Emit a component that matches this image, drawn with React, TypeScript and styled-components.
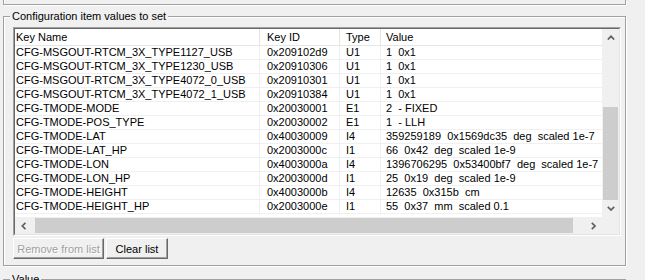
import React from 'react'
import styled, { createGlobalStyle } from 'styled-components'

const GlobalStyle = createGlobalStyle`
  html, body {
    margin: 0;
    background: #f0f0f0;
    overflow: hidden;
  }
  body {
    font-family: "Liberation Sans", Arial, sans-serif;
    font-size: 11px;
    color: #000;
  }
`

const Page = styled.div`
  padding-left: 3px;
  width: 623px;
`

// bottom edge of the group box above, the rest is scrolled out of view
const GroupTail = styled.div`
  height: 4px;
  border: 1px solid #a0a0a0;
  border-top: none;
  box-shadow: 1px 1px 0 #fff, inset 1px 0 0 #fff;
`

const GroupBox = styled.div<{ $top: number; $height?: number }>`
  margin-top: ${(p) => p.$top}px;
  border: 1px solid #a0a0a0;
  box-shadow: 1px 1px 0 #fff, inset 1px 1px 0 #fff;
  padding: 0 4px 6px 9px;
  ${(p) => (p.$height ? `height: ${p.$height}px;` : '')}
`

const Legend = styled.div`
  width: fit-content;
  margin: -7px 0 0 -3px;
  padding: 0 2px;
  background: #f0f0f0;
  line-height: 13px;
  white-space: nowrap;
`

const ListFrame = styled.div`
  margin-top: 4px;
  width: 608px;
  height: 209px;
  box-sizing: border-box;
  border: 1px solid;
  border-color: #a0a0a0 #fff #fff #a0a0a0;
`

const ListInner = styled.div`
  height: 100%;
  box-sizing: border-box;
  border: 1px solid;
  border-color: #696969 #e3e3e3 #e3e3e3 #696969;
  background: #fff;
  display: grid;
  grid-template-columns: 1fr 17px;
  grid-template-rows: 1fr 17px;
`

const Viewport = styled.div`
  overflow: hidden;
  min-width: 0;
`

const HeaderRow = styled.div`
  display: flex;
  height: 17px;
  box-sizing: border-box;
  border-bottom: 1px solid #e5e5e5;
`

const HeaderCell = styled.div<{ $w: number; $pad: number }>`
  flex: none;
  width: ${(p) => p.$w}px;
  box-sizing: border-box;
  padding-left: ${(p) => p.$pad}px;
  border-right: 1px solid #e5e5e5;
  line-height: 16px;
  white-space: nowrap;
  overflow: hidden;
`

const Row = styled.div`
  display: flex;
  height: 14px;
  box-sizing: border-box;
  border-bottom: 1px solid #f0f0f0;
`

const Cell = styled.div<{ $w: number; $pad: number }>`
  flex: none;
  width: ${(p) => p.$w}px;
  box-sizing: border-box;
  padding-left: ${(p) => p.$pad}px;
  border-right: 1px solid #f0f0f0;
  line-height: 13px;
  white-space: pre;
  overflow: hidden;
`

const VScroll = styled.div`
  background: #f0f0f0;
  display: flex;
  flex-direction: column;
`

const HScroll = styled.div`
  background: #f0f0f0;
  display: flex;
`

const Corner = styled.div`
  background: #f0f0f0;
`

const ArrowBox = styled.div`
  flex: none;
  width: 17px;
  height: 17px;
  display: flex;
  align-items: center;
  justify-content: center;
`

const VTrack = styled.div`
  flex: 1;
  display: flex;
  flex-direction: column;
  justify-content: flex-end;
  padding: 0 1px;
`

const HTrack = styled.div`
  flex: 1;
  display: flex;
  align-items: center;
`

const Thumb = styled.div<{ $len: number; $offset?: number; $horizontal?: boolean }>`
  background: #cdcdcd;
  ${(p) =>
    p.$horizontal
      ? `width: ${p.$len}px; height: 15px; margin-left: ${p.$offset ?? 0}px;`
      : `height: ${p.$len}px;`}
`

const ButtonRow = styled.div`
  display: flex;
  gap: 2px;
  margin-top: 2px;
`

const PushButton = styled.button<{ $w: number }>`
  width: ${(p) => p.$w}px;
  height: 21px;
  padding: 0;
  font: inherit;
  color: #000;
  background: #f0f0f0;
  border: 1px solid;
  border-color: #fff #696969 #696969 #fff;
  box-shadow: inset -1px -1px 0 #a0a0a0;

  &:disabled {
    color: #a0a0a0;
    text-shadow: 1px 1px 0 #fff;
  }
`

const Chevron = ({ dir }: { dir: 'up' | 'down' | 'left' | 'right' }) => {
  const pts = {
    up: '0.8,4.5 4,1.3 7.2,4.5',
    down: '0.8,0.8 4,4 7.2,0.8',
    left: '4.5,0.8 1.3,4 4.5,7.2',
    right: '0.8,0.8 4,4 0.8,7.2',
  }[dir]
  const vertical = dir === 'up' || dir === 'down'
  return (
    <svg width={vertical ? 8 : 5} height={vertical ? 5 : 8}>
      <polyline points={pts} fill="none" stroke="#606060" strokeWidth="1.7" />
    </svg>
  )
}

const columns = [
  { title: 'Key Name', w: 245, pad: 1 },
  { title: 'Key ID', w: 80, pad: 7 },
  { title: 'Type', w: 41, pad: 6 },
  { title: 'Value', w: 400, pad: 5 },
]

const rows = [
  ['CFG-MSGOUT-RTCM_3X_TYPE1127_USB', '0x209102d9', 'U1', '1  0x1'],
  ['CFG-MSGOUT-RTCM_3X_TYPE1230_USB', '0x20910306', 'U1', '1  0x1'],
  ['CFG-MSGOUT-RTCM_3X_TYPE4072_0_USB', '0x20910301', 'U1', '1  0x1'],
  ['CFG-MSGOUT-RTCM_3X_TYPE4072_1_USB', '0x20910384', 'U1', '1  0x1'],
  ['CFG-TMODE-MODE', '0x20030001', 'E1', '2  - FIXED'],
  ['CFG-TMODE-POS_TYPE', '0x20030002', 'E1', '1  - LLH'],
  ['CFG-TMODE-LAT', '0x40030009', 'I4', '359259189  0x1569dc35  deg  scaled 1e-7'],
  ['CFG-TMODE-LAT_HP', '0x2003000c', 'I1', '66  0x42  deg  scaled 1e-9'],
  ['CFG-TMODE-LON', '0x4003000a', 'I4', '1396706295  0x53400bf7  deg  scaled 1e-7'],
  ['CFG-TMODE-LON_HP', '0x2003000d', 'I1', '25  0x19  deg  scaled 1e-9'],
  ['CFG-TMODE-HEIGHT', '0x4003000b', 'I4', '12635  0x315b  cm'],
  ['CFG-TMODE-HEIGHT_HP', '0x2003000e', 'I1', '55  0x37  mm  scaled 0.1'],
]

export default function App() {
  return (
    <>
      <GlobalStyle />
      <Page>
        <GroupTail />
        <GroupBox $top={11}>
          <Legend>Configuration item values to set</Legend>
          <ListFrame>
            <ListInner>
              <Viewport>
                <HeaderRow>
                  {columns.map((c) => (
                    <HeaderCell key={c.title} $w={c.w} $pad={c.pad}>
                      {c.title}
                    </HeaderCell>
                  ))}
                </HeaderRow>
                {rows.map((r) => (
                  <Row key={r[0]}>
                    {r.map((v, i) => (
                      <Cell key={i} $w={columns[i].w} $pad={columns[i].pad}>
                        {v}
                      </Cell>
                    ))}
                  </Row>
                ))}
                <Row />
              </Viewport>
              <VScroll>
                <ArrowBox>
                  <Chevron dir="up" />
                </ArrowBox>
                <VTrack>
                  <Thumb $len={93} />
                </VTrack>
                <ArrowBox>
                  <Chevron dir="down" />
                </ArrowBox>
              </VScroll>
              <HScroll>
                <ArrowBox>
                  <Chevron dir="left" />
                </ArrowBox>
                <HTrack>
                  <Thumb $horizontal $len={538} $offset={3} />
                </HTrack>
                <ArrowBox>
                  <Chevron dir="right" />
                </ArrowBox>
              </HScroll>
              <Corner />
            </ListInner>
          </ListFrame>
          <ButtonRow>
            <PushButton $w={91} disabled>
              Remove from list
            </PushButton>
            <PushButton $w={62}>Clear list</PushButton>
          </ButtonRow>
        </GroupBox>
        <GroupBox $top={13} $height={60}>
          <Legend>Value</Legend>
        </GroupBox>
      </Page>
    </>
  )
}
